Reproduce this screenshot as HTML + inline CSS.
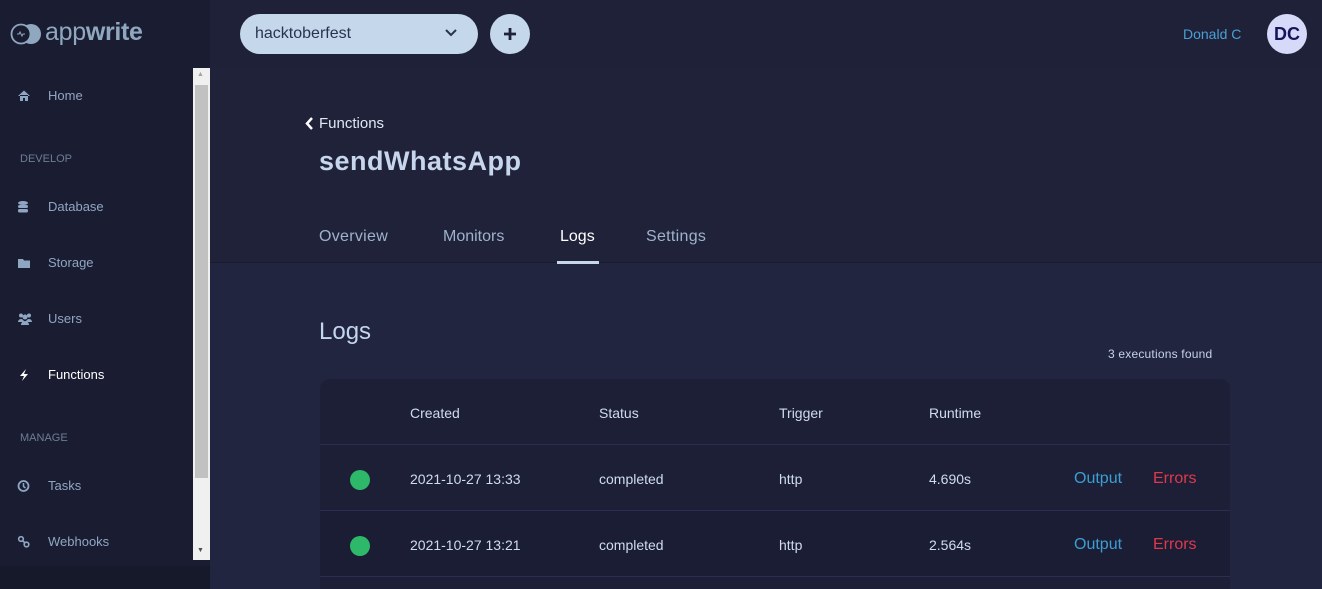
<!DOCTYPE html>
<html style="width:1322px;height:589px;overflow:hidden"><head><style>
*{margin:0;padding:0;box-sizing:border-box}
body{width:1322px;height:589px;overflow:hidden;background:#21253f;font-family:"Liberation Sans",sans-serif;position:relative;color:#c4d3ea}
.abs{position:absolute}
#side{left:0;top:0;width:210px;height:589px;background:#1a1d32}
#sidebot{left:0;top:566px;width:210px;height:23px;background:#161929}
#top{left:210px;top:0;width:1112px;height:69px;background:#1e2137}
#hdr{left:210px;top:69px;width:1112px;height:194px;background:#1f2239;border-bottom:1px solid #191c30}
.nav{position:absolute;left:20px;font-size:13px;color:#8fa6c2;height:16px}
.nav svg{position:absolute;left:-3px;top:1px}
.nav span.t{position:absolute;left:28px;white-space:nowrap}
.sec{position:absolute;left:20px;font-size:11px;color:#6d7d94}
.row{position:absolute;left:320px;width:910px;height:66px;border-top:1px solid #2a2f50;font-size:14px;color:#cfdcf0}
.row span{position:absolute;top:26px}
</style></head><body>
<div class="abs" id="side"></div>
<div class="abs" id="sidebot"></div>
<div class="abs" id="top"></div>
<div class="abs" id="hdr"></div>

<svg class="abs" style="left:10px;top:23px" width="32" height="22"><circle cx="21" cy="11" r="10" fill="#8fa8c0"/><circle cx="11" cy="11" r="9.5" fill="#1a1d32" stroke="#8fa8c0" stroke-width="1.8"/><path d="M7 11h2l1-2 2 4 1-2h2" stroke="#8fa8c0" stroke-width="1" fill="none"/></svg>
<div class="abs" style="left:45px;top:18px;font-size:25px;color:#8fa8c0;letter-spacing:-0.3px">app<b>write</b></div>

<div class="abs" style="left:193px;top:68px;width:17px;height:492px;background:#f0f0f0"></div>
<div class="abs" style="left:195px;top:85px;width:13px;height:393px;background:#c1c1c1"></div>
<div class="abs" style="left:197px;top:71px;font-size:7px;color:#a3a3a3">▲</div>
<div class="abs" style="left:197px;top:547px;font-size:7px;color:#505050">▼</div>

<div class="nav" style="top:88px"><svg width="14" height="14" viewBox="0 0 14 14"><path d="M1 7L7 1.5 13 7M3 6v6h3V9h2v3h3V6" fill="#8fa6c2"/></svg><span class="t">Home</span></div>
<div class="sec" style="top:153px">DEVELOP</div>
<div class="nav" style="top:199px"><svg width="14" height="14"><ellipse cx="6" cy="3" rx="5" ry="2" fill="#8fa6c2"/><rect x="1" y="5" width="10" height="3" rx="1.5" fill="#8fa6c2"/><rect x="1" y="9" width="10" height="3.5" rx="1.5" fill="#8fa6c2"/></svg><span class="t">Database</span></div>
<div class="nav" style="top:255px"><svg width="14" height="14"><path d="M1 3h5l1 1.5h6V12H1z" fill="#8fa6c2"/></svg><span class="t">Storage</span></div>
<div class="nav" style="top:311px"><svg width="16" height="14"><circle cx="4" cy="3.5" r="2" fill="#8fa6c2"/><circle cx="12" cy="3.5" r="2" fill="#8fa6c2"/><circle cx="8" cy="5" r="2.5" fill="#8fa6c2"/><path d="M1 10a3 3 0 0 1 6 0zM9 10a3 3 0 0 1 6 0zM4 13a4 4 0 0 1 8 0z" fill="#8fa6c2"/></svg><span class="t">Users</span></div>
<div class="nav" style="top:367px;color:#fff"><svg width="14" height="14"><path d="M9 1L3 8h4l-2 5 6-7H7z" fill="#fff"/></svg><span class="t">Functions</span></div>
<div class="sec" style="top:432px">MANAGE</div>
<div class="nav" style="top:478px"><svg width="14" height="14"><circle cx="6.5" cy="7" r="5" stroke="#8fa6c2" stroke-width="1.8" fill="none"/><path d="M6.5 4v3.5l2 1.5" stroke="#8fa6c2" stroke-width="1.5" fill="none"/></svg><span class="t">Tasks</span></div>
<div class="nav" style="top:534px"><svg width="14" height="14"><circle cx="4" cy="4" r="2.3" stroke="#8fa6c2" stroke-width="1.6" fill="none"/><circle cx="9.5" cy="9.5" r="2.3" stroke="#8fa6c2" stroke-width="1.6" fill="none"/><path d="M5.5 5.5l2.5 2.5" stroke="#8fa6c2" stroke-width="1.6"/></svg><span class="t">Webhooks</span></div>

<div class="abs" style="left:240px;top:14px;width:238px;height:40px;border-radius:20px;background:#c5d7ea;color:#2a3350;font-size:16px;padding:11px 15px">hacktoberfest</div>
<svg class="abs" style="left:444px;top:28px" width="14" height="10"><path d="M2 2l5 5 5-5" stroke="#2a3350" stroke-width="2" fill="none"/></svg>
<div class="abs" style="left:490px;top:14px;width:40px;height:40px;border-radius:50%;background:#c5d7ea"></div>
<svg class="abs" style="left:502px;top:26px" width="16" height="16"><path d="M8 2v12M2 8h12" stroke="#1e2137" stroke-width="2.8"/></svg>

<div class="abs" style="left:1183px;top:26px;font-size:14px;color:#4aa0d5">Donald C</div>
<div class="abs" style="left:1267px;top:14px;width:40px;height:40px;border-radius:50%;background:#d6d9f7;color:#15145c;font-size:18px;font-weight:bold;text-align:center;line-height:40px">DC</div>

<svg class="abs" style="left:305px;top:117px" width="10" height="13"><path d="M7 1L2 6.5 7 12" stroke="#fff" stroke-width="2.5" fill="none"/></svg>
<div class="abs" style="left:319px;top:115px;font-size:15px;color:#dfe8f5">Functions</div>
<div class="abs" style="left:319px;top:146px;font-size:27px;font-weight:bold;color:#c7d6ec;letter-spacing:0.5px">sendWhatsApp</div>

<div class="abs" style="left:319px;top:228px;font-size:16px;color:#9fb2cc;letter-spacing:0.3px">Overview</div>
<div class="abs" style="left:443px;top:228px;font-size:16px;color:#9fb2cc">Monitors</div>
<div class="abs" style="left:560px;top:228px;font-size:16px;color:#fff">Logs</div>
<div class="abs" style="left:557px;top:261px;width:42px;height:3px;background:#c5d7ea"></div>
<div class="abs" style="left:646px;top:228px;font-size:16px;color:#9fb2cc;letter-spacing:0.3px">Settings</div>

<div class="abs" style="left:319px;top:318px;font-size:24px;color:#c4d5ee">Logs</div>
<div class="abs" style="left:1108px;top:347px;font-size:12px;color:#c4d3ea;letter-spacing:0.2px">3 executions found</div>

<div class="abs" style="left:320px;top:379px;width:910px;height:210px;background:#1c1f36;border-radius:10px 10px 0 0"></div>
<div class="abs" style="left:410px;top:405px;font-size:14px;color:#cfdcf0">Created</div>
<div class="abs" style="left:599px;top:405px;font-size:14px;color:#cfdcf0">Status</div>
<div class="abs" style="left:779px;top:405px;font-size:14px;color:#cfdcf0">Trigger</div>
<div class="abs" style="left:929px;top:405px;font-size:14px;color:#cfdcf0">Runtime</div>

<div class="row" style="top:444px"><span style="left:30px;top:25px;width:20px;height:20px;border-radius:50%;background:#2eb86a"></span><span style="left:90px">2021-10-27 13:33</span><span style="left:279px">completed</span><span style="left:459px">http</span><span style="left:609px">4.690s</span><span style="left:754px;font-size:16px;top:25px;color:#3c9ed3">Output</span><span style="left:833px;font-size:16px;top:25px;color:#e0394d">Errors</span></div>
<div class="row" style="top:510px;background:#1a1d33"><span style="left:30px;top:25px;width:20px;height:20px;border-radius:50%;background:#2eb86a"></span><span style="left:90px">2021-10-27 13:21</span><span style="left:279px">completed</span><span style="left:459px">http</span><span style="left:609px">2.564s</span><span style="left:754px;font-size:16px;top:25px;color:#3c9ed3">Output</span><span style="left:833px;font-size:16px;top:25px;color:#e0394d">Errors</span></div>
<div class="row" style="top:576px;height:13px"></div>
</body></html>
